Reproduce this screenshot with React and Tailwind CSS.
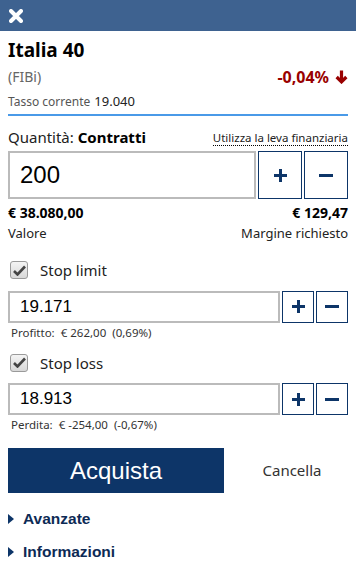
import React, { useState } from "react";

const sans = { fontFamily: '"Noto Sans", "Open Sans", sans-serif' };
const arial = { fontFamily: '"Liberation Sans", Arial, sans-serif' };

const StepButtons = ({ big }) => {
  const box = big
    ? "w-[44px] h-[48px]"
    : "w-[32px] h-[32px]";
  return (
    <div className="flex gap-[2px]">
      <button className={`${box} border border-[#0d3568] flex items-center justify-center bg-white`}>
        <svg width="13" height="13" viewBox="0 0 13 13">
          <rect x="5" y="0" width="3" height="13" fill="#0d3568" />
          <rect x="0" y="5" width="13" height="3" fill="#0d3568" />
        </svg>
      </button>
      <button className={`${box} border border-[#0d3568] flex items-center justify-center bg-white`}>
        <svg width="14" height="3" viewBox="0 0 14 3">
          <rect x="0" y="0" width="14" height="3" fill="#0d3568" />
        </svg>
      </button>
    </div>
  );
};

const Check = ({ label, checked, onChange }) => (
  <label className="flex items-center gap-[12px] cursor-pointer" onClick={onChange}>
    <span className="w-[18px] h-[18px] ml-[2px] rounded-[3px] border border-[#9a9a9a] bg-gradient-to-b from-[#f4f4f4] to-[#d8d8d8] flex items-center justify-center">
      {checked && (
        <svg width="13" height="11" viewBox="0 0 13 11">
          <path d="M1 6 L4.5 9.5 L12 1.5" stroke="#444" strokeWidth="2.6" fill="none" />
        </svg>
      )}
    </span>
    <span className="text-[15px] text-[#222]">{label}</span>
  </label>
);

const Caret = () => (
  <svg width="6" height="10" viewBox="0 0 6 10" className="mr-[9px]">
    <path d="M0 0 L6 5 L0 10 Z" fill="#0d3568" />
  </svg>
);

export default function App() {
  const [limit, setLimit] = useState(true);
  const [loss, setLoss] = useState(true);

  return (
    <div className="w-[356px] h-[567px] bg-white overflow-hidden" style={sans}>
      <div className="h-[31px] bg-[#3e6290] flex items-center px-[9px]">
        <svg width="14" height="14" viewBox="0 0 14 14">
          <path d="M2 2 L12 12 M12 2 L2 12" stroke="white" strokeWidth="4" strokeLinecap="round" />
        </svg>
      </div>

      <div className="px-[8px]">
        <div className="pt-[6px] text-[19px] font-bold text-black leading-[26px]">Italia 40</div>
        <div className="flex justify-between items-center mt-[4px] leading-[20px]">
          <span className="text-[14px] text-[#666]">(FIBi)</span>
          <span className="flex items-center text-[16px] font-bold text-[#990000]">
            -0,04%
            <svg width="13" height="14" viewBox="0 0 12 13" className="ml-[6px]">
              <path d="M6 0.5 V11 M1.5 6.5 L6 11 L10.5 6.5" stroke="#990000" strokeWidth="3" fill="none" strokeLinejoin="miter" />
            </svg>
          </span>
        </div>
        <div className="mt-[6px] text-[12px] leading-[16px] pb-[4px] border-b-[2px] border-[#4a9ae8]">
          <span className="text-[#555]">Tasso corrente</span>
          <span className="text-[#222] ml-[4px] text-[13px]">19.040</span>
        </div>

        <div className="flex justify-between items-end mt-[11px] leading-[20px]">
          <span className="text-[15px] text-[#222]">
            Quantità: <b className="text-black">Contratti</b>
          </span>
          <span className="text-[11.5px] text-[#222] border-b border-dotted border-black leading-[14px] mb-[1px]">
            Utilizza la leva finanziaria
          </span>
        </div>
        <div className="flex gap-[2px] mt-[4px]">
          <input
            defaultValue="200"
            className="flex-1 min-w-0 h-[48px] border-[2px] border-[#bbb] px-[10px] text-[24px] text-black outline-none"
            style={arial}
          />
          <StepButtons big />
        </div>

        <div className="flex justify-between mt-[4px] leading-[20px]">
          <div>
            <div className="text-[14px] font-bold text-black">€ 38.080,00</div>
            <div className="text-[13px] text-[#222]">Valore</div>
          </div>
          <div className="text-right">
            <div className="text-[14px] font-bold text-black">€ 129,47</div>
            <div className="text-[13px] text-[#222]">Margine richiesto</div>
          </div>
        </div>

        <div className="mt-[16px]">
          <Check label="Stop limit" checked={limit} onChange={() => setLimit(!limit)} />
        </div>
        <div className="flex gap-[2px] mt-[9px]">
          <input
            defaultValue="19.171"
            className="flex-1 min-w-0 h-[32px] border-[2px] border-[#bbb] px-[10px] text-[17px] text-black outline-none"
            style={arial}
          />
          <StepButtons />
        </div>
        <div className="text-[11.5px] text-[#333] mt-[2px] pl-[3px] leading-[15px]">
          Profitto:&nbsp; € 262,00&nbsp; (0,69%)
        </div>

        <div className="mt-[12px]">
          <Check label="Stop loss" checked={loss} onChange={() => setLoss(!loss)} />
        </div>
        <div className="flex gap-[2px] mt-[9px]">
          <input
            defaultValue="18.913"
            className="flex-1 min-w-0 h-[32px] border-[2px] border-[#bbb] px-[10px] text-[17px] text-black outline-none"
            style={arial}
          />
          <StepButtons />
        </div>
        <div className="text-[11.5px] text-[#333] mt-[2px] pl-[3px] leading-[15px]">
          Perdita:&nbsp; € -254,00&nbsp; (-0,67%)
        </div>

        <div className="flex items-center mt-[16px]">
          <button
            className="w-[216px] h-[45px] bg-[#0d3568] text-white text-[24px]"
            style={arial}
          >
            Acquista
          </button>
          <button className="flex-1 pl-[12px] text-[15px] text-[#333] text-center">Cancella</button>
        </div>

        <div className="flex items-center mt-[16px] h-[20px]" style={arial}>
          <Caret />
          <span className="text-[15.5px] font-bold text-[#0d2a55]">Avanzate</span>
        </div>
        <div className="flex items-center mt-[13px] h-[20px]" style={arial}>
          <Caret />
          <span className="text-[15.5px] font-bold text-[#0d2a55]">Informazioni</span>
        </div>
      </div>
    </div>
  );
}
